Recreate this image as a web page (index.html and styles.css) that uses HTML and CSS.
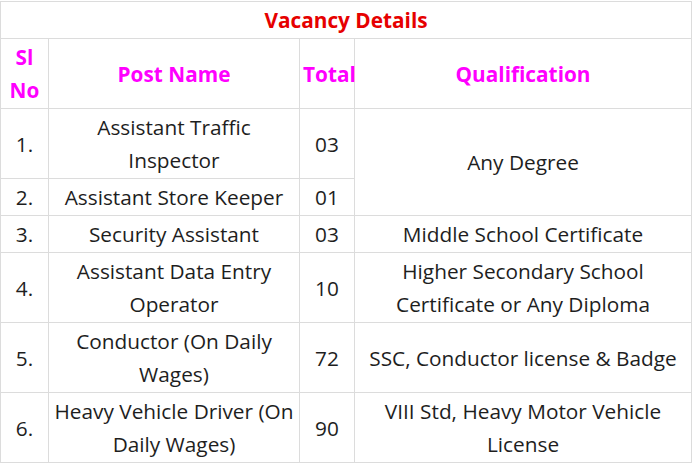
FILE: index.html
```html
<!DOCTYPE html>
<html>
<head>
<meta charset="utf-8">
<link rel="stylesheet" href="styles.css">
</head>
<body>
<table class="vacancy">
  <colgroup>
    <col class="c-sl">
    <col class="c-post">
    <col class="c-total">
    <col class="c-qual">
  </colgroup>
  <tr><th colspan="4" class="title">Vacancy Details</th></tr>
  <tr class="head">
    <th>Sl No</th>
    <th>Post Name</th>
    <th>Total</th>
    <th>Qualification</th>
  </tr>
  <tr><td>1.</td><td>Assistant Traffic Inspector</td><td>03</td><td rowspan="2">Any Degree</td></tr>
  <tr><td>2.</td><td>Assistant Store Keeper</td><td>01</td></tr>
  <tr><td>3.</td><td>Security Assistant</td><td>03</td><td>Middle School Certificate</td></tr>
  <tr><td>4.</td><td>Assistant Data Entry Operator</td><td>10</td><td>Higher Secondary School Certificate or Any Diploma</td></tr>
  <tr><td>5.</td><td>Conductor (On Daily Wages)</td><td>72</td><td>SSC, Conductor license &amp; Badge</td></tr>
  <tr><td>6.</td><td>Heavy Vehicle Driver (On Daily Wages)</td><td>90</td><td>VIII Std, Heavy Motor Vehicle License</td></tr>
</table>
</body>
</html>
```
FILE: styles.css
```css
html, body {
  margin: 0;
  padding: 0;
  background: #fff;
}
body {
  padding-top: 1px;
  font-family: "Open Sans", "Noto Sans", sans-serif;
  color: #1e1e1e;
}
.vacancy {
  border-collapse: collapse;
  width: 691px;
  table-layout: fixed;
  font-size: 20.8px;
  line-height: 33px;
}
.c-sl { width: 48px; }
.c-post { width: 251px; }
.c-total { width: 55px; }
.c-qual { width: 337px; }
.vacancy th,
.vacancy td {
  border: 1px solid #dcdcdc;
  padding: 2px 3px 1px;
  text-align: center;
  vertical-align: middle;
}
.vacancy th.title {
  color: #e60000;
  font-weight: bold;
}
.vacancy tr.head th {
  color: #ff00ff;
  font-weight: bold;
}
```
